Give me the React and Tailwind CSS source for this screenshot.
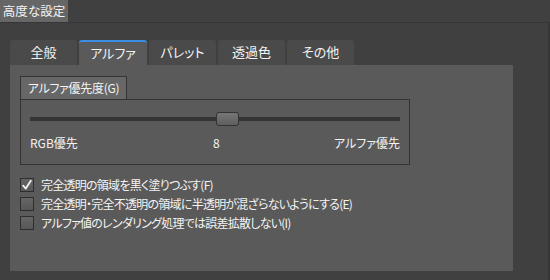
import React from 'react';

const FONT = {
  fontFamily: '"Noto Sans CJK JP", "Noto Sans", sans-serif',
  fontFeatureSettings: '"palt"',
};

const TABS = ['全般', 'アルファ', 'パレット', '透過色', 'その他'];

const OPTIONS = [
  { label: '完全透明の領域を黒く塗りつぶす(F)', checked: true },
  { label: '完全透明・完全不透明の領域に半透明が混ざらないようにする(E)', checked: false },
  { label: 'アルファ値のレンダリング処理では誤差拡散しない(I)', checked: false },
];

const Check = ({ checked }) => (
  <div className="w-[14px] h-[14px] shrink-0 border border-[#2e2e2e] bg-gradient-to-b from-[#666] to-[#575757] flex items-center justify-center">
    {checked && (
      <svg width="12" height="12" viewBox="0 0 12 12">
        <path d="M2.2 6.6 L4.8 9.6 L9.8 1.8" stroke="#f2f2f2" strokeWidth="1.8" fill="none" strokeLinecap="round" strokeLinejoin="round" />
      </svg>
    )}
  </div>
);

export default function App() {
  return (
    <div className="w-[550px] h-[280px] bg-[#404040] text-[#f4f4f4] text-[12px] flex flex-col" style={FONT}>
      <div className="h-[23px] flex border-b border-[#363636] shrink-0">
        <div className="w-[68px] bg-[#666] text-[12.5px] leading-[22px] text-center">高度な設定</div>
      </div>
      <div className="flex-1 flex border-r-2 border-[#363636] pl-[10px] pr-[35px] pt-[17px] pb-[9px]">
        <div className="flex-1 flex flex-col">
          <div className="flex gap-[2px] h-[25px]">
            {TABS.map((t, i) => (
              <div
                key={t}
                className={
                  i === 1
                    ? 'w-[68px] h-[25px] bg-[#5a5a5a] border-t-2 border-[#3a8de3] rounded-t-[3px] flex items-center justify-center text-[13px] pb-[1px]'
                    : 'w-[67px] h-[25px] bg-[#4a4a4a] rounded-t-[3px] flex items-center justify-center text-[13px] pb-[1px]'
                }
              >
                {t}
              </div>
            ))}
          </div>
          <div className="flex-1 bg-[#5a5a5a] px-[10px] pt-[11px]">
            <div className="w-[390px]">
              <div className="flex">
                <div className="w-[107px] h-[23px] bg-[#676767] border border-b-0 border-[#333] leading-[22px] text-[12px] tracking-[-0.3px] text-center">
                  アルファ優先度(G)
                </div>
              </div>
              <div className="border border-[#333] h-[66px] px-[9px] pt-[17px] relative">
                <div className="h-[4px] bg-[#353535]" />
                <div className="absolute left-[195px] top-[12px] w-[23px] h-[14px] rounded-[3px] border border-[#333] bg-gradient-to-b from-[#767676] to-[#5f5f5f]" />
                <div className="relative mt-[14px] h-[16px] flex justify-between text-[12px] leading-[16px]">
                  <span>RGB優先</span>
                  <span className="absolute left-[183px]">8</span>
                  <span>アルファ優先</span>
                </div>
              </div>
            </div>
            <div className="mt-[13px] flex flex-col gap-[5px]">
              {OPTIONS.map((o) => (
                <div key={o.label} className="flex items-center gap-[7px] h-[14px]">
                  <Check checked={o.checked} />
                  <span className="leading-[14px] text-[12px] tracking-[-0.75px]">{o.label}</span>
                </div>
              ))}
            </div>
          </div>
        </div>
      </div>
    </div>
  );
}
